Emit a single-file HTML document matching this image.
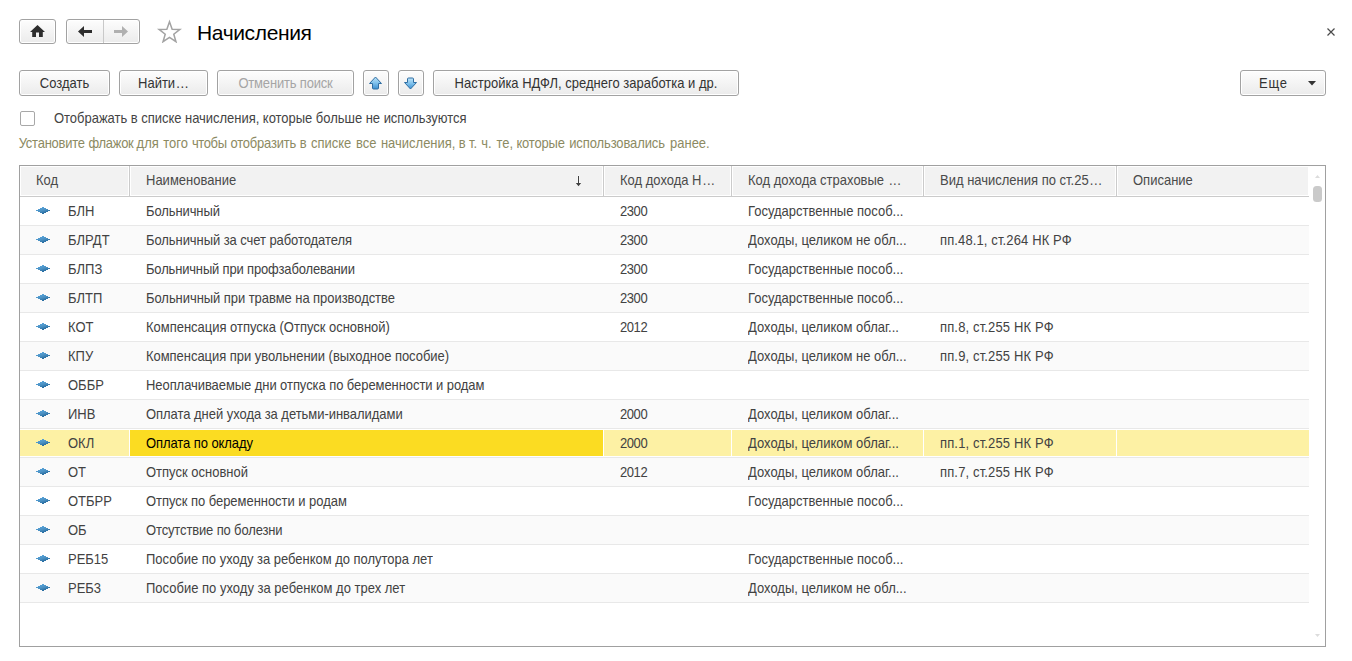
<!DOCTYPE html>
<html lang="ru"><head><meta charset="utf-8"><title>Начисления</title>
<style>
*{box-sizing:border-box;margin:0;padding:0}
html,body{width:1352px;height:661px;background:#fff;overflow:hidden}
body{font-family:"Liberation Sans",Arial,sans-serif;font-size:13px;color:#333;position:relative}
.btn{position:absolute;border:1px solid #a2a2a2;border-radius:3px;background:linear-gradient(#fdfdfd,#f3f3f3 55%,#ebebeb);color:#333;text-align:center;white-space:nowrap;box-shadow:inset 0 0 0 1px #fff}
.tb{top:70px;height:26px;line-height:24px;font-size:13px}
.t{display:block;height:24px;transform:scaleY(1.074);transform-origin:0 2.5px}
.dis{color:#a5a5a5}
.title{position:absolute;left:197px;top:21px;font-size:21px;line-height:24px;letter-spacing:-0.36px;color:#000;white-space:nowrap}
.chk{position:absolute;left:20px;top:111px;width:15px;height:15px;border:1px solid #a8a8a8;border-radius:2px;background:#fff}
.chklbl{transform:scaleY(1.074);transform-origin:0 12px;position:absolute;left:54px;top:111px;letter-spacing:-0.027px;line-height:16px;color:#444;white-space:nowrap}
.hint span{position:absolute;top:0}
.hint{transform:scaleY(1.074);transform-origin:0 12px;position:absolute;left:0;width:800px;height:16px;top:136px;line-height:16px;color:#8c8a62;white-space:nowrap}
.grid{position:absolute;left:19px;top:165px;width:1307px;height:482px;border:1px solid #a0a0a0;background:#fff}
.hdr{position:absolute;left:20px;top:166px;width:1289px;height:31px;background:#fff;border-bottom:1px solid #cbcbcb}
.hc{position:absolute;top:1px;height:28px;line-height:25px;color:#4a4a4a;white-space:nowrap;background:#f2f2f2}
.ht{display:block;transform:scaleY(1.074);transform-origin:0 3.5px}
.el{letter-spacing:0.6px;margin-left:1.2px}
.hs{position:absolute;top:0;width:1px;height:30px;background:#cbcbcb}
.row{position:absolute;left:20px;width:1289px;height:29px;border-bottom:1px solid #e8e8e8;background:#fff}
.row.alt{background:#fafafa}
.row.sel{background:#fff}
.sc{position:absolute;top:1px;height:26px;background:#fdf1a4}
.c{position:absolute;top:0;height:28px;line-height:28px;white-space:nowrap;color:#424242;transform:scaleY(1.074);transform-origin:0 4.5px}
.c0{left:48px}.c1{left:126px}.c2{left:600px}.c3{left:728px}.c4{left:920px}
.ic{position:absolute;left:16px;top:10px}
.row.sel .c1{color:#000}
</style></head><body>
<svg width="0" height="0" style="position:absolute"><defs>
<linearGradient id="gdm" x1="0.2" y1="0" x2="0.8" y2="1"><stop offset="0" stop-color="#5aa8e0"/><stop offset="0.5" stop-color="#4a90c2"/><stop offset="1" stop-color="#15598f"/></linearGradient>
<linearGradient id="gu" x1="0" y1="0" x2="0" y2="1"><stop offset="0" stop-color="#bfe4f8"/><stop offset="0.5" stop-color="#7fc1ec"/><stop offset="1" stop-color="#3b8fd0"/></linearGradient>
<linearGradient id="gd" x1="0" y1="0" x2="0" y2="1"><stop offset="0" stop-color="#bfe4f8"/><stop offset="0.5" stop-color="#7fc1ec"/><stop offset="1" stop-color="#3b8fd0"/></linearGradient>
</defs></svg>

<div class="btn" style="left:19px;top:19px;width:37px;height:25px">
<svg width="15" height="12" viewBox="0 0 15 12" style="position:absolute;left:10px;top:5px"><path d="M7.5 0 L15 7 H12.8 V12 H9 V7.5 H6 V12 H2.2 V7 H0 Z" fill="#2d2d2d"/></svg></div>
<div class="btn" style="left:66px;top:19px;width:74px;height:25px">
<svg width="14" height="11" viewBox="0 0 14 11" style="position:absolute;left:11px;top:6px"><path d="M0 5.5 L6 0 V4 H14 V7 H6 V11 Z" fill="#2d2d2d"/></svg>
<div style="position:absolute;left:36px;top:0;width:1px;height:23px;background:#c9c9c9"></div>
<svg width="14" height="11" viewBox="0 0 14 11" style="position:absolute;left:47px;top:6px"><path d="M14 5.5 L8 0 V4 H0 V7 H8 V11 Z" fill="#b0b0b0"/></svg>
</div>
<svg width="26" height="24" viewBox="0 0 26 24" style="position:absolute;left:156px;top:19px"><path d="M13.50 2.80 L16.15 10.16 L23.96 10.40 L17.78 15.19 L19.97 22.70 L13.50 18.30 L7.03 22.70 L9.22 15.19 L3.04 10.40 L10.85 10.16 Z" fill="#fff" stroke="#a3a3a3" stroke-width="1.5" stroke-linejoin="miter"/></svg>
<div class="title">Начисления</div>
<svg width="10" height="10" viewBox="0 0 10 10" style="position:absolute;left:1325.5px;top:26.5px"><path d="M1.5 1.5 L8.5 8.5 M8.5 1.5 L1.5 8.5" stroke="#4a4a4a" stroke-width="1.2" fill="none"/></svg>

<div class="btn tb" style="left:19px;width:91px"><span class="t">Создать</span></div>
<div class="btn tb" style="left:119px;width:89px"><span class="t">Найти<span class="el">...</span></span></div>
<div class="btn tb dis" style="left:217px;width:137px"><span class="t" style="letter-spacing:-0.18px">Отменить поиск</span></div>
<div class="btn tb" style="left:363px;width:26px"><svg width="15" height="14" viewBox="0 0 15 14" style="position:absolute;left:4px;top:5px"><path d="M7.5 1 L13.5 7.5 H10.5 V12 Q10.5 13 9.5 13 H5.5 Q4.5 13 4.5 12 V7.5 H1.5 Z" fill="url(#gu)" stroke="#2f6ea3" stroke-width="1" stroke-linejoin="round"/></svg></div>
<div class="btn tb" style="left:398px;width:26px"><svg width="15" height="14" viewBox="0 0 15 14" style="position:absolute;left:4px;top:5px"><path d="M7.5 13 L13.5 6.5 H10.5 V3 Q10.5 2 9.5 2 H5.5 Q4.5 2 4.5 3 V6.5 H1.5 Z" fill="url(#gd)" stroke="#2f6ea3" stroke-width="1" stroke-linejoin="round"/></svg></div>
<div class="btn tb" style="left:433px;width:306px"><span class="t">Настройка НДФЛ, среднего заработка и др.</span></div>
<div class="btn tb" style="left:1240px;width:86px;text-align:left;padding-left:18px"><span class="t" style="letter-spacing:0.8px">Еще</span>
<svg width="9" height="5" viewBox="0 0 9 5" style="position:absolute;left:66.5px;top:10px"><path d="M0 0 H8 L4 4.6 Z" fill="#333"/></svg></div>

<div class="chk"></div>
<div class="chklbl">Отображать в списке начисления, которые больше не используются</div>
<div class="hint"><span style="left:18.7px;letter-spacing:-0.24px">Установите</span> <span style="left:88.5px;letter-spacing:-0.32px">флажок</span> <span style="left:136.6px">для</span> <span style="left:163.3px">того</span> <span style="left:191.9px;letter-spacing:-0.38px">чтобы</span> <span style="left:230.5px;letter-spacing:-0.21px">отобразить</span> <span style="left:299.8px">в</span> <span style="left:310.9px">списке</span> <span style="left:356.0px">все</span> <span style="left:380.9px">начисления,</span> <span style="left:458.8px">в</span> <span style="left:469.1px">т.</span> <span style="left:481.2px">ч.</span> <span style="left:496.5px">те,</span> <span style="left:516.4px;letter-spacing:-0.17px">которые</span> <span style="left:569.2px;letter-spacing:-0.11px">использовались</span> <span style="left:670.0px">ранее.</span></div>

<div class="grid"></div>
<div class="hdr">
<div class="hc" style="left:1px;width:107px;padding-left:15px"><span class="ht">Код</span></div>
<div class="hs" style="left:109px"></div>
<div class="hc" style="left:111px;width:471px;padding-left:15px"><span class="ht">Наименование</span></div>
<svg width="7" height="12" viewBox="0 0 7 12" style="position:absolute;left:555px;top:9px"><path d="M3 1 H4 V8 H6.2 L3.5 11.2 L0.8 8 H3 Z" fill="#404040" stroke="#fff" stroke-width="1" paint-order="stroke" stroke-opacity="0.8"/></svg>
<div class="hs" style="left:583px"></div>
<div class="hc" style="left:585px;width:125px;padding-left:15px"><span class="ht">Код дохода Н<span class="el">...</span></span></div>
<div class="hs" style="left:711px"></div>
<div class="hc" style="left:713px;width:189px;padding-left:15px"><span class="ht">Код дохода страховые <span class="el">...</span></span></div>
<div class="hs" style="left:903px"></div>
<div class="hc" style="left:905px;width:190px;padding-left:15px"><span class="ht">Вид начисления по ст.25<span class="el">...</span></span></div>
<div class="hs" style="left:1096px"></div>
<div class="hc" style="left:1098px;width:190px;padding-left:15px"><span class="ht">Описание</span></div>
</div>
<div class="row" style="top:197px"><svg class="ic" viewBox="0 0 14 7" width="14" height="7"><path shape-rendering="crispEdges" d="M6 0h2v1h2v1h2v1h2v1h-2v1h-2v1h-2v1h-2v-1h-2v-1h-2v-1h-2v-1h2v-1h2v-1h2z" fill="url(#gdm)"/></svg><span class="c c0">БЛН</span><span class="c c1" style="letter-spacing:-0.100px">Больничный</span><span class="c c2" style="letter-spacing:-0.433px">2300</span><span class="c c3">Государственные пособ...</span><span class="c c4"></span></div>
<div class="row alt" style="top:226px"><svg class="ic" viewBox="0 0 14 7" width="14" height="7"><path shape-rendering="crispEdges" d="M6 0h2v1h2v1h2v1h2v1h-2v1h-2v1h-2v1h-2v-1h-2v-1h-2v-1h-2v-1h2v-1h2v-1h2z" fill="url(#gdm)"/></svg><span class="c c0">БЛРДТ</span><span class="c c1" style="letter-spacing:-0.070px">Больничный за счет работодателя</span><span class="c c2" style="letter-spacing:-0.433px">2300</span><span class="c c3">Доходы, целиком не обл...</span><span class="c c4" style="letter-spacing:0.125px">пп.48.1, ст.264 НК РФ</span></div>
<div class="row" style="top:255px"><svg class="ic" viewBox="0 0 14 7" width="14" height="7"><path shape-rendering="crispEdges" d="M6 0h2v1h2v1h2v1h2v1h-2v1h-2v1h-2v1h-2v-1h-2v-1h-2v-1h-2v-1h2v-1h2v-1h2z" fill="url(#gdm)"/></svg><span class="c c0">БЛПЗ</span><span class="c c1" style="letter-spacing:-0.169px">Больничный при профзаболевании</span><span class="c c2" style="letter-spacing:-0.433px">2300</span><span class="c c3">Государственные пособ...</span><span class="c c4"></span></div>
<div class="row alt" style="top:284px"><svg class="ic" viewBox="0 0 14 7" width="14" height="7"><path shape-rendering="crispEdges" d="M6 0h2v1h2v1h2v1h2v1h-2v1h-2v1h-2v1h-2v-1h-2v-1h-2v-1h-2v-1h2v-1h2v-1h2z" fill="url(#gdm)"/></svg><span class="c c0">БЛТП</span><span class="c c1" style="letter-spacing:-0.058px">Больничный при травме на производстве</span><span class="c c2" style="letter-spacing:-0.433px">2300</span><span class="c c3">Государственные пособ...</span><span class="c c4"></span></div>
<div class="row" style="top:313px"><svg class="ic" viewBox="0 0 14 7" width="14" height="7"><path shape-rendering="crispEdges" d="M6 0h2v1h2v1h2v1h2v1h-2v1h-2v1h-2v1h-2v-1h-2v-1h-2v-1h-2v-1h2v-1h2v-1h2z" fill="url(#gdm)"/></svg><span class="c c0">КОТ</span><span class="c c1" style="letter-spacing:-0.017px">Компенсация отпуска (Отпуск основной)</span><span class="c c2" style="letter-spacing:-0.433px">2012</span><span class="c c3">Доходы, целиком облаг...</span><span class="c c4" style="letter-spacing:0.147px">пп.8, ст.255 НК РФ</span></div>
<div class="row alt" style="top:342px"><svg class="ic" viewBox="0 0 14 7" width="14" height="7"><path shape-rendering="crispEdges" d="M6 0h2v1h2v1h2v1h2v1h-2v1h-2v1h-2v1h-2v-1h-2v-1h-2v-1h-2v-1h2v-1h2v-1h2z" fill="url(#gdm)"/></svg><span class="c c0">КПУ</span><span class="c c1" style="letter-spacing:-0.041px">Компенсация при увольнении (выходное пособие)</span><span class="c c2"></span><span class="c c3">Доходы, целиком не обл...</span><span class="c c4" style="letter-spacing:0.147px">пп.9, ст.255 НК РФ</span></div>
<div class="row" style="top:371px"><svg class="ic" viewBox="0 0 14 7" width="14" height="7"><path shape-rendering="crispEdges" d="M6 0h2v1h2v1h2v1h2v1h-2v1h-2v1h-2v1h-2v-1h-2v-1h-2v-1h-2v-1h2v-1h2v-1h2z" fill="url(#gdm)"/></svg><span class="c c0">ОББР</span><span class="c c1" style="letter-spacing:-0.069px">Неоплачиваемые дни отпуска по беременности и родам</span><span class="c c2"></span><span class="c c3"></span><span class="c c4"></span></div>
<div class="row alt" style="top:400px"><svg class="ic" viewBox="0 0 14 7" width="14" height="7"><path shape-rendering="crispEdges" d="M6 0h2v1h2v1h2v1h2v1h-2v1h-2v1h-2v1h-2v-1h-2v-1h-2v-1h-2v-1h2v-1h2v-1h2z" fill="url(#gdm)"/></svg><span class="c c0">ИНВ</span><span class="c c1" style="letter-spacing:-0.041px">Оплата дней ухода за детьми-инвалидами</span><span class="c c2" style="letter-spacing:-0.433px">2000</span><span class="c c3">Доходы, целиком облаг...</span><span class="c c4"></span></div>
<div class="row sel" style="top:429px"><div class="sc" style="left:0px;width:109px;background:#fdf1a4"></div><div class="sc" style="left:110px;width:473px;background:#fbdc22"></div><div class="sc" style="left:584px;width:127px;background:#fdf1a4"></div><div class="sc" style="left:712px;width:191px;background:#fdf1a4"></div><div class="sc" style="left:904px;width:192px;background:#fdf1a4"></div><div class="sc" style="left:1097px;width:192px;background:#fdf1a4"></div><svg class="ic" viewBox="0 0 14 7" width="14" height="7"><path shape-rendering="crispEdges" d="M6 0h2v1h2v1h2v1h2v1h-2v1h-2v1h-2v1h-2v-1h-2v-1h-2v-1h-2v-1h2v-1h2v-1h2z" fill="url(#gdm)"/></svg><span class="c c0">ОКЛ</span><span class="c c1" style="letter-spacing:-0.080px">Оплата по окладу</span><span class="c c2" style="letter-spacing:-0.433px">2000</span><span class="c c3">Доходы, целиком облаг...</span><span class="c c4" style="letter-spacing:0.147px">пп.1, ст.255 НК РФ</span></div>
<div class="row alt" style="top:458px"><svg class="ic" viewBox="0 0 14 7" width="14" height="7"><path shape-rendering="crispEdges" d="M6 0h2v1h2v1h2v1h2v1h-2v1h-2v1h-2v1h-2v-1h-2v-1h-2v-1h-2v-1h2v-1h2v-1h2z" fill="url(#gdm)"/></svg><span class="c c0">ОТ</span><span class="c c1">Отпуск основной</span><span class="c c2" style="letter-spacing:-0.433px">2012</span><span class="c c3">Доходы, целиком облаг...</span><span class="c c4" style="letter-spacing:0.147px">пп.7, ст.255 НК РФ</span></div>
<div class="row" style="top:487px"><svg class="ic" viewBox="0 0 14 7" width="14" height="7"><path shape-rendering="crispEdges" d="M6 0h2v1h2v1h2v1h2v1h-2v1h-2v1h-2v1h-2v-1h-2v-1h-2v-1h-2v-1h2v-1h2v-1h2z" fill="url(#gdm)"/></svg><span class="c c0">ОТБРР</span><span class="c c1" style="letter-spacing:-0.041px">Отпуск по беременности и родам</span><span class="c c2"></span><span class="c c3">Государственные пособ...</span><span class="c c4"></span></div>
<div class="row alt" style="top:516px"><svg class="ic" viewBox="0 0 14 7" width="14" height="7"><path shape-rendering="crispEdges" d="M6 0h2v1h2v1h2v1h2v1h-2v1h-2v1h-2v1h-2v-1h-2v-1h-2v-1h-2v-1h2v-1h2v-1h2z" fill="url(#gdm)"/></svg><span class="c c0">ОБ</span><span class="c c1" style="letter-spacing:-0.140px">Отсутствие по болезни</span><span class="c c2"></span><span class="c c3"></span><span class="c c4"></span></div>
<div class="row" style="top:545px"><svg class="ic" viewBox="0 0 14 7" width="14" height="7"><path shape-rendering="crispEdges" d="M6 0h2v1h2v1h2v1h2v1h-2v1h-2v1h-2v1h-2v-1h-2v-1h-2v-1h-2v-1h2v-1h2v-1h2z" fill="url(#gdm)"/></svg><span class="c c0">РЕБ15</span><span class="c c1" style="letter-spacing:-0.021px">Пособие по уходу за ребенком до полутора лет</span><span class="c c2"></span><span class="c c3">Государственные пособ...</span><span class="c c4"></span></div>
<div class="row alt" style="top:574px"><svg class="ic" viewBox="0 0 14 7" width="14" height="7"><path shape-rendering="crispEdges" d="M6 0h2v1h2v1h2v1h2v1h-2v1h-2v1h-2v1h-2v-1h-2v-1h-2v-1h-2v-1h2v-1h2v-1h2z" fill="url(#gdm)"/></svg><span class="c c0">РЕБ3</span><span class="c c1" style="letter-spacing:0.008px">Пособие по уходу за ребенком до трех лет</span><span class="c c2"></span><span class="c c3">Доходы, целиком не обл...</span><span class="c c4"></span></div>
<div style="position:absolute;left:1313px;top:186px;width:9px;height:16px;border-radius:3.5px;background:#cacaca"></div>
<svg width="5" height="3" viewBox="0 0 5 3" style="position:absolute;left:1315px;top:175px"><path d="M0 3 L2.5 0 L5 3 Z" fill="#dcdcdc"/></svg>
<svg width="5" height="3" viewBox="0 0 5 3" style="position:absolute;left:1315px;top:634px"><path d="M0 0 H5 L2.5 3 Z" fill="#dcdcdc"/></svg>
</body></html>
